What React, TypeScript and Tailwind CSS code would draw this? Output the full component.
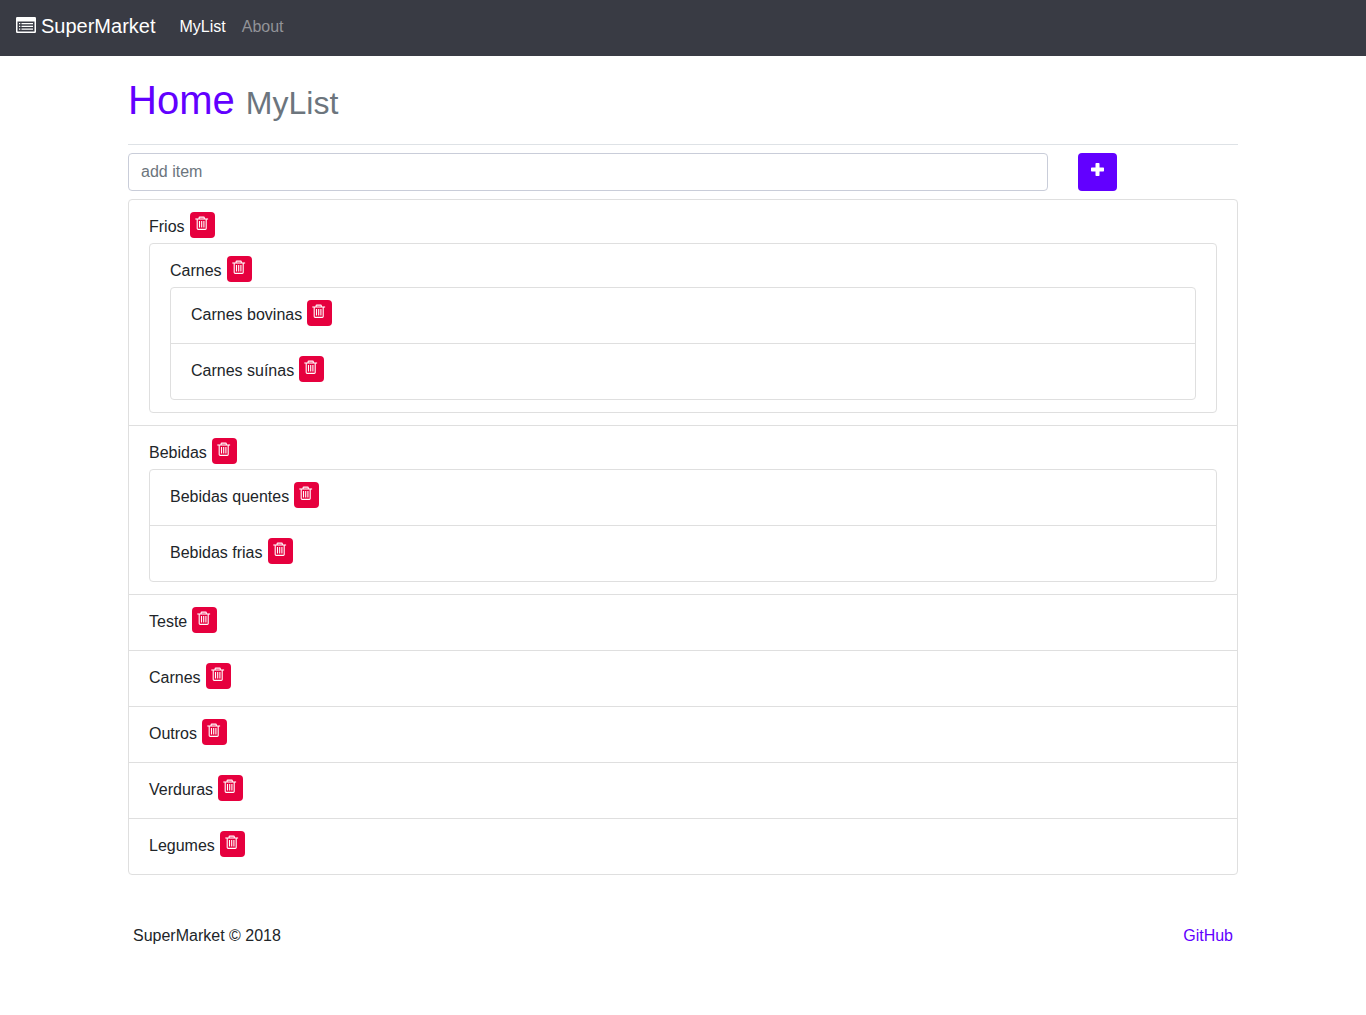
import React from "react";

type Item = { name: string; children?: Item[] };

const items: Item[] = [
  {
    name: "Frios",
    children: [
      {
        name: "Carnes",
        children: [{ name: "Carnes bovinas" }, { name: "Carnes suínas" }],
      },
    ],
  },
  {
    name: "Bebidas",
    children: [{ name: "Bebidas quentes" }, { name: "Bebidas frias" }],
  },
  { name: "Teste" },
  { name: "Carnes" },
  { name: "Outros" },
  { name: "Verduras" },
  { name: "Legumes" },
];

function ListIcon() {
  return (
    <svg className="mb-0.5 h-4 w-5" viewBox="0 0 20 16" fill="currentColor" aria-hidden="true">
      <path
        fillRule="evenodd"
        d="M1.200 0h17.600A1.200 1.200 0 0 1 20 1.200v13.600a1.200 1.200 0 0 1-1.200 1.200H1.200A1.200 1.200 0 0 1 0 14.800V1.200A1.200 1.200 0 0 1 1.200 0zM1.500 4.500v9.500a.5.5 0 0 0 .5.5h16a.5.5 0 0 0 .5-.5V4.500z"
      />
      <path d="M3 6h1.300v1.300H3zM5.500 6H17v1.300H5.500zM3 8.700h1.300V10H3zM5.500 8.700H17V10H5.500zM3 11.400h1.300v1.300H3zM5.500 11.400H17v1.300H5.500z" />
    </svg>
  );
}

function TrashIcon() {
  return (
    <svg className="h-3.5 w-3.5" viewBox="0 0 14 14" fill="none" stroke="currentColor" strokeWidth="1.1" aria-hidden="true">
      <path d="M.3 3h12.800" />
      <path d="M4.100 3V1.800q0-.7.7-.7h3.800q.7 0 .7.7V3" />
      <path d="M2.200 3v9.500q0 .9.9.9h7.200q.9 0 .9-.9V3" />
      <path d="M4.500 5v6.500M6.700 5v6.500M8.900 5v6.500" />
    </svg>
  );
}

function PlusIcon() {
  return (
    <svg className="h-[13px] w-[13px]" viewBox="0 0 13 13" fill="currentColor" aria-hidden="true">
      <path d="M5.200 0h2.600q.7 0 .7.7v3.800h3.800q.7 0 .7.7v2.600q0 .7-.7.7H8.500v3.800q0 .7-.7.7H5.200q-.7 0-.7-.7V8.500H.7Q0 8.500 0 7.800V5.200q0-.7.7-.7h3.800V.7q0-.7.7-.7z" />
    </svg>
  );
}

function ItemList({ list }: { list: Item[] }) {
  return (
    <ul className="divide-y divide-[#dfdfdf] rounded border border-[#dfdfdf] bg-white">
      {list.map((item) => (
        <li key={item.name} className="px-5 py-3">
          <div className="flex h-[31px] items-start gap-[5px]">
            <span className="leading-[30px]">{item.name}</span>
            <button
              type="button"
              aria-label={`Remove ${item.name}`}
              className="flex h-[26px] w-[25px] rounded bg-[#e6003e] px-[5px] pt-1 text-white"
            >
              <TrashIcon />
            </button>
          </div>
          {item.children && <ItemList list={item.children} />}
        </li>
      ))}
    </ul>
  );
}

export default function App() {
  return (
    <div className="font-['Liberation_Sans',Arial,sans-serif] text-base text-[#212529]">
      <nav className="flex min-h-14 items-center gap-6 bg-[#393b44] px-4 pb-1 text-white">
        <a href="#home" className="flex items-center gap-[5px] text-xl">
          <ListIcon />
          SuperMarket
        </a>
        <div className="flex gap-4 pt-0.5">
          <a href="#mylist">MyList</a>
          <a href="#about" className="text-[#929398]">About</a>
        </div>
      </nav>
      <main className="mx-auto max-w-[1140px] px-[15px] pt-5">
        <h1 className="border-b border-[#dee2e6] pb-[17px] text-[40px] leading-[48px] text-[#6200ff]">
          Home <small className="text-[32px] text-[#6c757d]">MyList</small>
        </h1>
        <form className="my-2 grid grid-cols-12 gap-[30px]" onSubmit={(e) => e.preventDefault()}>
          <input
            type="text"
            aria-label="Item name"
            placeholder="add item"
            className="col-span-10 h-[38px] w-full rounded border border-[#c9cdd9] bg-white px-3 placeholder:text-[#6c757d]"
          />
          <button
            type="submit"
            aria-label="Add item"
            className="flex h-[38px] w-[39px] justify-center rounded bg-[#6200ff] pt-[10px] text-white"
          >
            <PlusIcon />
          </button>
        </form>
        <ItemList list={items} />
        <footer className="flex justify-between px-[5px] pt-[49px] pb-12">
          <p>SuperMarket © 2018</p>
          <a href="#github" className="text-[#6200ff]">GitHub</a>
        </footer>
      </main>
    </div>
  );
}
